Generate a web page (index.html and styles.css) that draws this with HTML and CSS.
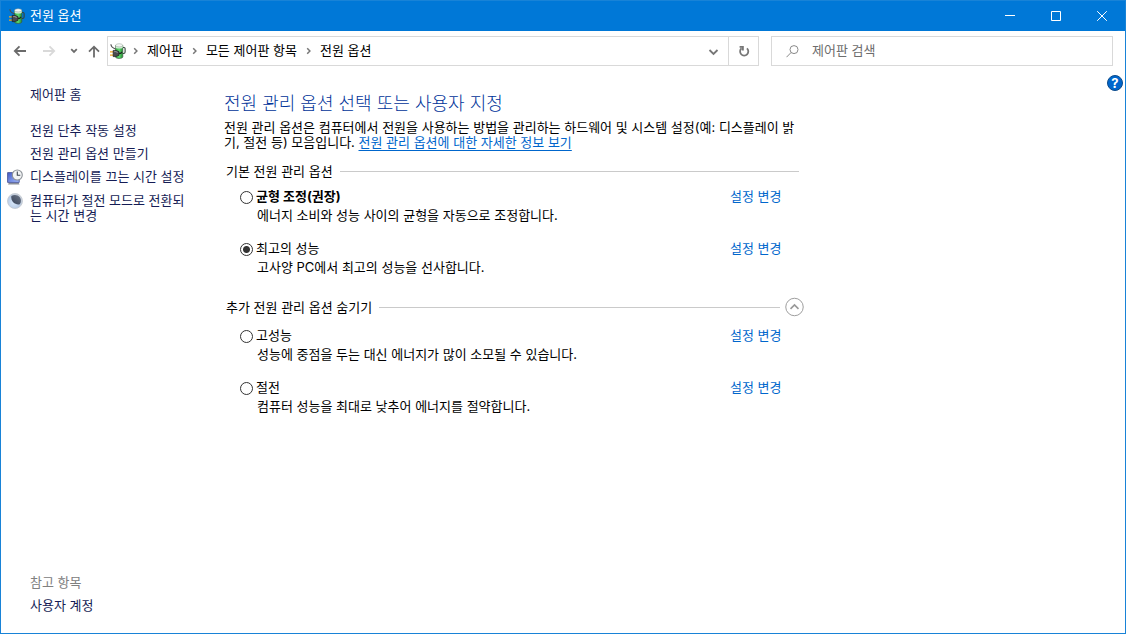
FILE: index.html
```html
<!DOCTYPE html>
<html lang="ko">
<head>
<meta charset="utf-8">
<meta name="viewport" content="width=device-width, initial-scale=1">
<title>전원 옵션</title>
<link rel="stylesheet" href="styles.css">
</head>
<body>
<svg class="defs" aria-hidden="true">
  <defs>
    <linearGradient id="cell" x1="0" x2="1"><stop offset="0" stop-color="#2f9c3c"/><stop offset=".5" stop-color="#5fdc70"/><stop offset="1" stop-color="#1f8a2d"/></linearGradient>
    <linearGradient id="screen" x1="0" y1="0" x2="1" y2="1"><stop offset="0" stop-color="#4058c4"/><stop offset="1" stop-color="#a4bcff"/></linearGradient>
    <radialGradient id="moon" cx=".4" cy=".6" r=".6"><stop offset="0" stop-color="#d8e8fa"/><stop offset=".7" stop-color="#b9cce6"/><stop offset="1" stop-color="#ccd1d9"/></radialGradient>
    <linearGradient id="shade" x1="1" y1="0" x2="0" y2="1"><stop offset="0" stop-color="#6d7686"/><stop offset="1" stop-color="#38435a"/></linearGradient>
    <symbol id="power" viewBox="0 0 16 16">
      <path d="M12.500 4.500h1.500c.7 0 1.100.4 1.100 1.100v3.300c0 1-.6 1.600-1.600 1.600h-1" fill="none" stroke="#33443a" stroke-width="1.100"/>
      <path d="M5.500 2.500v11.300c0 2.200 7.300 2.200 7.300 0V2.500z" fill="url(#cell)" stroke="#3f5a44" stroke-width=".7"/>
      <path d="M5.600 2.500v2.200c1.500 1.200 5.700 1.200 7.100 0V2.500z" fill="#d3ecd6"/>
      <ellipse cx="9.150" cy="2.300" rx="3.500" ry="1.600" fill="#f4f7f4" stroke="#93a096" stroke-width=".5"/>
      <path d="M.9 1.300c.2 1.900 1.200 3.500 4 4.400" fill="none" stroke="#4b4b4b" stroke-width="1.100"/>
      <path d="M0 8.900h3.500M0 12.100h3.500" stroke="#f2a51c" stroke-width="1.400"/>
      <path d="M3.200 7.400h2.600l3.200 1.200v3.700l-3.200 1.300H3.200z" fill="#4a4a4e" stroke="#1b1b1b" stroke-width=".7"/>
      <path d="M4.300 8.600h1.400l2 .8" fill="none" stroke="#b4b4b8" stroke-width=".8"/>
      <path d="M9 10.400h1.700l1.300-1.600" fill="none" stroke="#222" stroke-width="1.200"/>
    </symbol>
    <symbol id="crumb" viewBox="0 0 6 8"><path d="M1.200 1.300l2.700 2.700-2.700 2.700" fill="none" stroke="#777" stroke-width="1.500"/></symbol>
  </defs>
</svg>
<div class="window">
  <header class="titlebar">
    <svg class="app-icon"><use href="#power"/></svg>
    <span class="title">전원 옵션</span>
    <button class="caption" aria-label="최소화"><svg viewBox="0 0 10 10"><path d="M0 4.500h10"/></svg></button>
    <button class="caption" aria-label="최대화"><svg viewBox="0 0 10 10"><path d="M.5.5h9v9h-9z"/></svg></button>
    <button class="caption" aria-label="닫기"><svg viewBox="0 0 10 10"><path d="M.2.2l9.6 9.6M9.800.2L.2 9.800"/></svg></button>
  </header>

  <nav class="toolbar" aria-label="탐색">
    <button class="nav-btn" aria-label="뒤로"><svg viewBox="0 0 14 12"><path d="M13 6H2M6.500 1.300L1.800 6l4.700 4.700"/></svg></button>
    <button class="nav-btn nav-off" aria-label="앞으로" disabled><svg viewBox="0 0 14 12"><path d="M1 6h11M7.500 1.300L12.200 6l-4.700 4.700"/></svg></button>
    <button class="nav-btn nav-recent" aria-label="최근 위치"><svg viewBox="0 0 14 12"><path d="M4.200 4.200L7 7l2.800-2.800"/></svg></button>
    <button class="nav-btn nav-up" aria-label="위로"><svg viewBox="0 0 14 14"><path d="M7 13.500V2.700M2 7.700l5-5 5 5"/></svg></button>
    <div class="address">
      <svg class="app-icon"><use href="#power"/></svg>
      <ol class="crumbs">
        <li><svg><use href="#crumb"/></svg><a href="#">제어판</a></li>
        <li><svg><use href="#crumb"/></svg><a href="#">모든 제어판 항목</a></li>
        <li><svg><use href="#crumb"/></svg><a href="#">전원 옵션</a></li>
      </ol>
      <button class="address-btn" aria-label="이전 위치"><svg viewBox="0 0 12 12"><path d="M2.500 5l4 4 4-4"/></svg></button>
      <button class="address-btn refresh" aria-label="새로 고침"><svg viewBox="0 0 12 12"><path d="M8.900 3.400A4.100 4.100 0 1 1 3.600 3.300M1.600 1.900h3.300v3.500"/></svg></button>
    </div>
    <label class="search">
      <svg viewBox="0 0 13 13" aria-hidden="true"><circle cx="8" cy="4.600" r="4"/><path d="M5.100 7.500L.5 12.200"/></svg>
      <input type="search" placeholder="제어판 검색" aria-label="제어판 검색">
    </label>
  </nav>

  <div class="body">
    <aside class="sidebar">
      <a class="home" href="#">제어판 홈</a>
      <ul class="tasks">
        <li><a href="#">전원 단추 작동 설정</a></li>
        <li><a href="#">전원 관리 옵션 만들기</a></li>
        <li>
          <svg class="task-icon" viewBox="0 0 16 16"><path d="M1 15.500h11.500l-.8-1.800H1.800z" fill="#8b8f98"/><path d="M.6 3.600h11.600v9.800H.6z" fill="url(#screen)" stroke="#5562a0"/><circle cx="10.300" cy="6" r="5" fill="#f2f4f5" stroke="#8d9298" stroke-width="1.100"/><path d="M10.300 2.600v3.600h3" fill="none" stroke="#3c4653" stroke-width="1.100"/></svg>
          <a href="#">디스플레이를 끄는 시간 설정</a>
        </li>
        <li>
          <svg class="task-icon" viewBox="0 0 16 16"><circle cx="8" cy="8" r="7.500" fill="url(#moon)" stroke="#c2c8d0" stroke-width=".8"/><path d="M4.300 2.900C7 1.300 10.800 1.700 12.800 4.200c1.600 2.300 1.500 5-.1 7C8.800 12.300 3.600 8.600 4.300 2.900z" fill="url(#shade)"/></svg>
          <a href="#">컴퓨터가 절전 모드로 전환되는 시간 변경</a>
        </li>
      </ul>
      <div class="see-also">
        <span>참고 항목</span>
        <a href="#">사용자 계정</a>
      </div>
    </aside>

    <main class="content">
      <h1>전원 관리 옵션 선택 또는 사용자 지정</h1>
      <p class="intro">전원 관리 옵션은 컴퓨터에서 전원을 사용하는 방법을 관리하는 하드웨어 및 시스템 설정(예: 디스플레이 밝기, 절전 등) 모음입니다. <a href="#">전원 관리 옵션에 대한 자세한 정보 보기</a></p>

      <section class="group">
        <h2 class="group-head">기본 전원 관리 옵션</h2>
        <div class="plan">
          <input type="radio" name="plan" id="balanced">
          <label class="active" for="balanced">균형 조정(권장)</label>
          <a href="#">설정 변경</a>
          <p>에너지 소비와 성능 사이의 균형을 자동으로 조정합니다.</p>
        </div>
        <div class="plan">
          <input type="radio" name="plan" id="ultimate" checked>
          <label for="ultimate">최고의 성능</label>
          <a href="#">설정 변경</a>
          <p>고사양 PC에서 최고의 성능을 선사합니다.</p>
        </div>
      </section>

      <section class="group extra">
        <div class="extra-head">
          <h2 class="group-head">추가 전원 관리 옵션 숨기기</h2>
          <button class="collapse" aria-label="추가 전원 관리 옵션 숨기기"><svg viewBox="0 0 20 20"><circle cx="10" cy="10" r="9.200"/><path d="M5.800 12l4.200-4.200 4.200 4.200" stroke-width="1.700"/></svg></button>
        </div>
        <div class="plan">
          <input type="radio" name="plan" id="high">
          <label for="high">고성능</label>
          <a href="#">설정 변경</a>
          <p>성능에 중점을 두는 대신 에너지가 많이 소모될 수 있습니다.</p>
        </div>
        <div class="plan">
          <input type="radio" name="plan" id="saver">
          <label for="saver">절전</label>
          <a href="#">설정 변경</a>
          <p>컴퓨터 성능을 최대로 낮추어 에너지를 절약합니다.</p>
        </div>
      </section>
    </main>

    <button class="help" aria-label="도움말">?</button>
  </div>
</div>
</body>
</html>
```
FILE: styles.css
```css
* { box-sizing: border-box; }

body, h1, h2, p, ul, ol { margin: 0; padding: 0; }
ul, ol { list-style: none; }

body {
  font: 13px/15px Inter, "Noto Sans CJK KR", sans-serif;
  color: #000;
  background: #fff;
}

button, input { font: inherit; color: inherit; }
button { padding: 0; border: 0; background: none; }
a { color: #0066cc; text-decoration: none; }
svg { flex: none; }
.defs { position: absolute; width: 0; height: 0; }

.window {
  display: flex;
  flex-direction: column;
  min-height: 100vh;
  border: 1px solid #1883d7;
}

/* Title bar */
.titlebar {
  display: flex;
  align-items: center;
  height: 30px;
  padding-left: 8px;
  background: #0078d7;
  color: #fff;
}
.app-icon { width: 16px; height: 16px; }
.title { flex: 1; margin-left: 5px; padding-bottom: 2px; }
.caption {
  display: grid;
  place-items: center;
  width: 46px;
  height: 30px;
}
.caption svg { width: 10px; height: 10px; fill: none; stroke: #fff; }

/* Navigation row */
.toolbar {
  display: flex;
  align-items: center;
  padding: 5px 12px 5px 8px;
}
.nav-btn {
  display: grid;
  place-items: center;
  width: 30px;
  height: 30px;
}
.nav-btn:first-child { width: 22px; }
.nav-btn svg { width: 14px; height: 14px; fill: none; stroke: #6b6b6b; stroke-width: 1.8; }
.nav-btn.nav-off { width: 36px; }
.nav-btn.nav-off svg { stroke: #d9d9d9; }
.nav-btn.nav-recent { width: 14px; }
.nav-btn.nav-up { width: 26px; }
.address {
  display: flex;
  align-items: center;
  flex: 1;
  height: 30px;
  padding-left: 2px;
  border: 1px solid #d9d9d9;
}
.crumbs { display: flex; flex: 1; margin-left: 7px; }
.crumbs li { display: flex; align-items: center; margin-right: 9px; }
.crumbs svg { width: 6px; height: 8px; margin-right: 8px; }
.crumbs a { padding-bottom: 2px; color: #000; }
.address-btn {
  display: grid;
  place-items: center;
  width: 30px;
  height: 28px;
}
.address-btn svg { width: 12px; height: 12px; fill: none; stroke: #777; stroke-width: 1.8; }
.refresh { border-left: 1px solid #d9d9d9; }
.search {
  display: flex;
  align-items: center;
  flex: 0 1 342px;
  height: 30px;
  margin-left: 12px;
  padding-left: 14px;
  border: 1px solid #d9d9d9;
}
.search svg { width: 13px; height: 13px; fill: none; stroke: #8a8a8a; }
.search input {
  flex: 1;
  min-width: 0;
  margin-left: 13px;
  padding: 0 0 2px;
  border: 0;
  outline: 0;
  background: none;
}
.search input::placeholder { color: #6d6d6d; opacity: 1; }

/* Page body */
.body { display: flex; flex: 1; }

.sidebar {
  display: flex;
  flex-direction: column;
  flex: 0 0 193px;
  padding: 16px 0 20px 6px;
}
.sidebar a { color: #151c55; }
.home { margin-left: 23px; }
.tasks { display: grid; gap: 8px; margin-top: 21px; }
.tasks li { display: grid; grid-template-columns: 16px 1fr; column-gap: 7px; }
.tasks a { grid-column: 2; padding-right: 6px; }
.task-icon { width: 16px; height: 16px; }
.see-also {
  display: grid;
  gap: 8px;
  margin: auto 0 0 23px;
  color: #808080;
}

.content {
  flex: 0 1 580px;
  min-width: 0;
  margin-left: 30px;
  padding-top: 21px;
}
h1 {
  font-size: 18px;
  font-weight: 300;
  line-height: 24px;
  color: #003399;
}
.intro { margin: 4px 4px 0 0; }
.intro a {
  display: inline-block;
  text-decoration: underline 1px;
  text-underline-offset: 3px;
}

.group { margin: 13px 5px 0 2px; }
.group-head {
  display: flex;
  align-items: center;
  flex: 1;
  gap: 7px;
  font-size: 13px;
  font-weight: 400;
  line-height: 16px;
}
.group-head::after { content: ""; flex: 1; border-top: 1px solid #cacaca; }
.plan {
  display: grid;
  grid-template-columns: 13px 1fr 52px;
  column-gap: 3px;
  row-gap: 3px;
  align-items: center;
  margin: 17px 17px 0 14px;
  line-height: 16px;
}
.group-head + .plan { margin-top: 9px; }
.plan p { grid-column: 2 / -1; padding-left: 1px; }
.plan a { white-space: nowrap; }
.plan .active { font-weight: 700; }
.plan input {
  appearance: none;
  width: 13px;
  height: 13px;
  margin: 3px 0 0;
  border: 1px solid #333;
  border-radius: 50%;
  background: #fff;
}
.plan input:checked { background: radial-gradient(circle, #333 3px, #fff 4px); }

.extra { margin: 22px 0 0 2px; }
.extra-head { display: flex; align-items: center; gap: 5px; }
.extra .plan { margin-right: 22px; }
.extra-head + .plan { margin-top: 10px; }
.collapse { width: 19px; height: 20px; }
.collapse svg { display: block; width: 19px; height: 20px; fill: none; stroke: #999; }

.help {
  width: 16px;
  height: 16px;
  margin: 4px 2px 0 auto;
  border: 1px solid #0b4a8a;
  border-radius: 50%;
  background: #0066cc;
  color: #fff;
  font-weight: 700;
  line-height: 14px;
}
```
